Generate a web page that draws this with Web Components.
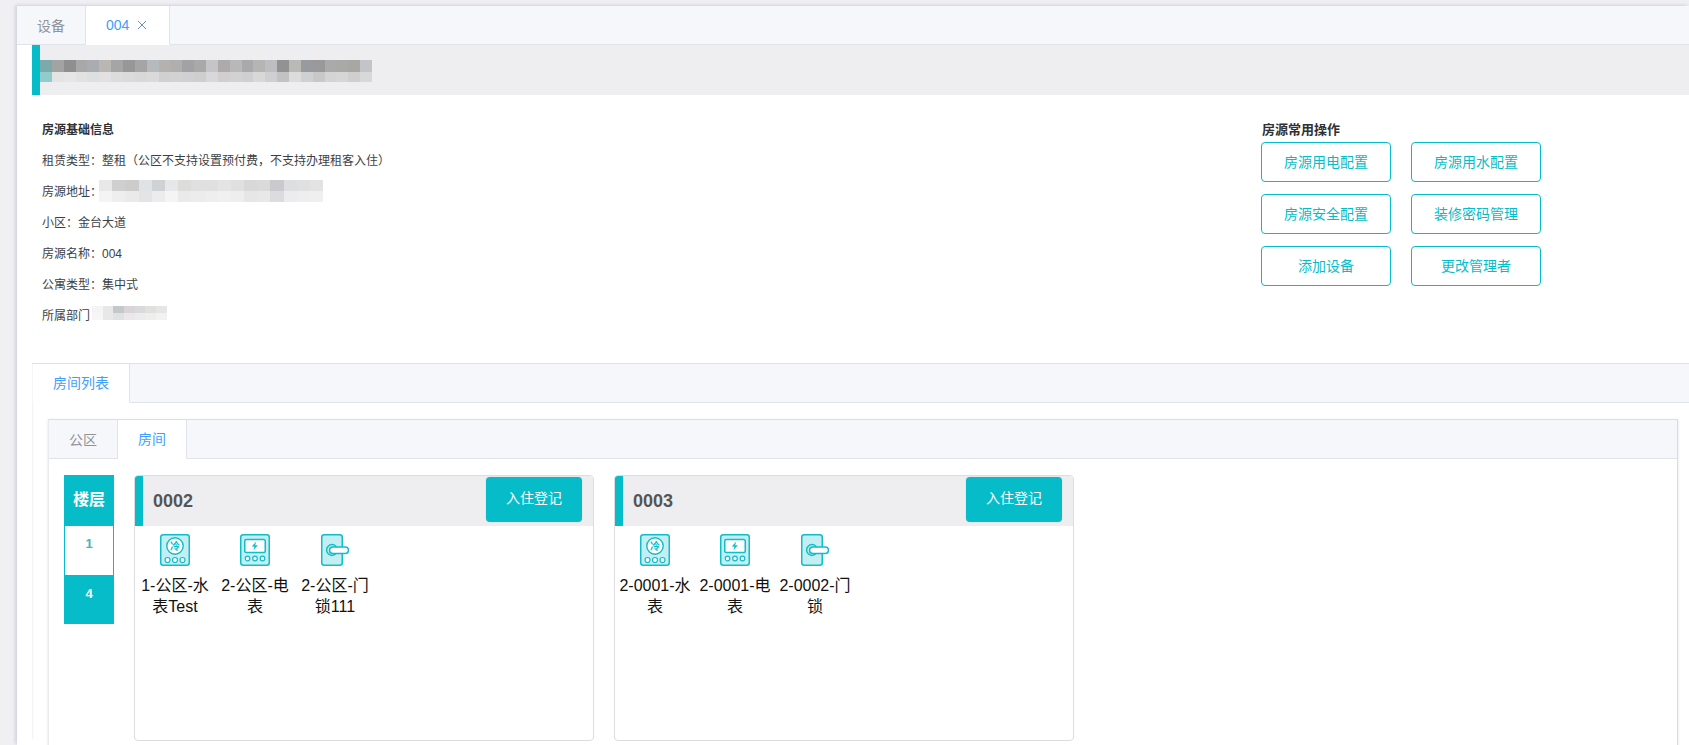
<!DOCTYPE html>
<html lang="zh">
<head>
<meta charset="utf-8">
<title>房源详情</title>
<style>
  html, body { margin: 0; padding: 0; height: 745px; overflow: hidden; }
  body {
    background: #f0f0f3;
    color: #303133;
    font-family: "Liberation Sans", "Noto Sans CJK SC", sans-serif;
  }
</style>
</head>
<body>
<house-page></house-page>

<script>
const FONT = '"Liberation Sans", "Noto Sans CJK SC", sans-serif';
const TEAL = '#06bcc8';

class TabBar extends HTMLElement {
  constructor() {
    super();
    this.attachShadow({mode: 'open'}).innerHTML = `
      <style>
        :host {
          display: flex;
          height: 39px;
          box-sizing: border-box;
          background: #f5f7fa;
          border-bottom: 1px solid #e0e3ec;
        }
      </style>
      <slot></slot>
    `;
  }
}
customElements.define('tab-bar', TabBar);

class TabItem extends HTMLElement {
  constructor() {
    super();
    this.attachShadow({mode: 'open'}).innerHTML = `
      <style>
        :host {
          display: flex;
          align-items: center;
          gap: 6px;
          box-sizing: border-box;
          height: 39px;
          padding: 0 20px 2px;
          font-size: 14px;
          color: #909399;
          border-right: 1px solid #e0e3ec;
        }
        :host([active]) {
          color: #409eff;
          background: #fff;
          border-bottom: 1px solid #fff;
        }
        :host([closable]) { padding-bottom: 0; }
        svg { display: block; }
      </style>
      <slot></slot>
      ${this.hasAttribute('closable') ? `<svg width="14" height="14" viewBox="0 0 14 14"><path d="M3 3l8 8M11 3l-8 8" stroke="#6f90c0" stroke-width="1" fill="none"/></svg>` : ''}
    `;
  }
}
customElements.define('tab-item', TabItem);

// stand-in for the pixelated parts of the screenshot
class MosaicStrip extends HTMLElement {
  constructor() {
    super();
    const top = (this.getAttribute('top') || '').split(' ');
    const bottom = (this.getAttribute('bottom') || '').split(' ');
    const cell = this.getAttribute('cell') || 12;
    const row = (list, h) => `<div class="row" style="height:${h}px">${list.map(c => `<i style="background:#${c};width:${cell}px"></i>`).join('')}</div>`;
    this.attachShadow({mode: 'open'}).innerHTML = `
      <style>
        :host { display: block; flex: none; }
        .row { display: flex; }
        i { display: block; height: 100%; }
      </style>
      ${row(top, this.getAttribute('h1') || 12)}
      ${row(bottom, this.getAttribute('h2') || 10)}
    `;
  }
}
customElements.define('mosaic-strip', MosaicStrip);

class InfoLine extends HTMLElement {
  constructor() {
    super();
    this.attachShadow({mode: 'open'}).innerHTML = `
      <style>
        :host {
          display: flex;
          align-items: center;
          height: 31px;
          font-size: 12px;
          color: #3c3f45;
          white-space: nowrap;
        }
        :host([title-line]) { font-weight: bold; color: #303133; }
      </style>
      <slot></slot>
    `;
  }
}
customElements.define('info-line', InfoLine);

class OutlineBtn extends HTMLElement {
  constructor() {
    super();
    this.attachShadow({mode: 'open'}).innerHTML = `
      <style>
        :host {
          display: flex;
          align-items: center;
          justify-content: center;
          box-sizing: border-box;
          width: 130px;
          height: 40px;
          padding-bottom: 2px;
          font-size: 14px;
          color: ${TEAL};
          background: #fff;
          border: 1px solid ${TEAL};
          border-radius: 4px;
        }
      </style>
      <slot></slot>
    `;
  }
}
customElements.define('outline-btn', OutlineBtn);

class FloorNav extends HTMLElement {
  constructor() {
    super();
    this.attachShadow({mode: 'open'}).innerHTML = `
      <style>
        :host {
          display: block;
          flex: none;
          align-self: flex-start;
          width: 50px;
          background: ${TEAL};
          color: #fff;
          text-align: center;
          font-weight: bold;
        }
        .head { height: 51px; line-height: 50px; font-size: 16px; }
        .item { box-sizing: border-box; height: 49px; line-height: 38px; font-size: 13px; }
        .item.on { background: #fff; color: #3fb6bf; margin: 0 1px; line-height: 36px; }
      </style>
      <div class="head">楼层</div>
      <div class="item on">1</div>
      <div class="item">4</div>
    `;
  }
}
customElements.define('floor-nav', FloorNav);

const ICONS = {
  water: `<svg width="30" height="32" viewBox="0 0 30 32">
      <rect x="0.75" y="0.75" width="28.5" height="30.5" rx="2.5" fill="#c4eff2" stroke="#10bdc9" stroke-width="1.5"/>
      <circle cx="15" cy="12" r="8.2" fill="#fff" stroke="#10bdc9" stroke-width="1.4"/>
      <text x="15" y="15.6" text-anchor="middle" font-size="10" font-weight="bold" fill="#10bdc9" font-family="'Noto Sans CJK SC', sans-serif">冷</text>
      <circle cx="7.5" cy="26" r="2.5" fill="#fff" stroke="#10bdc9" stroke-width="1.2"/>
      <circle cx="15" cy="26" r="2.5" fill="#fff" stroke="#10bdc9" stroke-width="1.2"/>
      <circle cx="22.5" cy="26" r="2.5" fill="#fff" stroke="#10bdc9" stroke-width="1.2"/>
    </svg>`,
  power: `<svg width="30" height="32" viewBox="0 0 30 32">
      <rect x="0.75" y="0.75" width="28.5" height="30.5" rx="2.5" fill="#c4eff2" stroke="#10bdc9" stroke-width="1.5"/>
      <rect x="4.75" y="5.5" width="20.5" height="13" rx="1.5" fill="#fff" stroke="#10bdc9" stroke-width="1.5"/>
      <path d="M16.2 7.6l-4.4 5h2.6l-1 3.6 4.4-5h-2.6z" fill="#10bdc9"/>
      <circle cx="7.5" cy="24.5" r="2.3" fill="#fff" stroke="#10bdc9" stroke-width="1.2"/>
      <circle cx="15" cy="24.5" r="2.3" fill="#fff" stroke="#10bdc9" stroke-width="1.2"/>
      <circle cx="22.5" cy="24.5" r="2.3" fill="#fff" stroke="#10bdc9" stroke-width="1.2"/>
    </svg>`,
  lock: `<svg width="28" height="32" viewBox="0 0 28 32">
      <rect x="0.75" y="0.75" width="20.5" height="30.5" rx="2.5" fill="#c4eff2" stroke="#10bdc9" stroke-width="1.5"/>
      <circle cx="11" cy="16" r="5.4" fill="#c4eff2" stroke="#10bdc9" stroke-width="1.5"/>
      <rect x="8.5" y="13" width="19" height="6.4" rx="3.2" fill="#fff" stroke="#10bdc9" stroke-width="1.5"/>
    </svg>`
};

class DeviceItem extends HTMLElement {
  constructor() {
    super();
    this.attachShadow({mode: 'open'}).innerHTML = `
      <style>
        :host {
          display: block;
          flex: none;
          width: 72px;
          text-align: center;
          font-size: 16px;
          line-height: 21px;
          color: #111;
          word-break: break-all;
        }
        .icon { display: flex; justify-content: center; height: 32px; margin-bottom: 9px; }
      </style>
      <div class="icon">${ICONS[this.getAttribute('kind')]}</div>
      <slot></slot>
    `;
  }
}
customElements.define('device-item', DeviceItem);

class RoomCard extends HTMLElement {
  constructor() {
    super();
    this.attachShadow({mode: 'open'}).innerHTML = `
      <style>
        :host {
          display: block;
          flex: none;
          box-sizing: border-box;
          width: 460px;
          height: 266px;
          background: #fff;
          border: 1px solid #dcdde0;
          border-radius: 4px;
          overflow: hidden;
        }
        .head {
          display: flex;
          align-items: flex-start;
          justify-content: space-between;
          box-sizing: border-box;
          height: 50px;
          padding: 1px 11px 0 10px;
          background: #eeeef0;
          border-left: 8px solid ${TEAL};
        }
        .no { font-size: 18px; font-weight: bold; color: #555; line-height: 48px; }
        .enter {
          width: 96px;
          height: 45px;
          line-height: 42px;
          text-align: center;
          font-size: 14px;
          color: #fff;
          background: ${TEAL};
          border-radius: 4px;
          box-shadow: 0 0 0 0.5px #dcdde0;
        }
        .list { display: flex; gap: 8px; padding: 8px 0 0 4px; }
      </style>
      <div class="head">
        <span class="no">${this.getAttribute('no')}</span>
        <div class="enter">入住登记</div>
      </div>
      <div class="list"><slot></slot></div>
    `;
  }
}
customElements.define('room-card', RoomCard);

class HousePage extends HTMLElement {
  constructor() {
    super();
    this.attachShadow({mode: 'open'}).innerHTML = `
      <style>
        :host {
          display: block;
          box-sizing: border-box;
          height: 745px;
          padding: 6px 0 0 17px;
          font-family: ${FONT};
        }
        * { box-sizing: border-box; }
        .page {
          height: 739px;
          background: #fff;
          box-shadow: -2px -1px 3px rgba(120, 125, 150, 0.25);
          overflow: hidden;
        }
        .content { padding-left: 15px; }
        .banner {
          display: flex;
          height: 50px;
          padding-top: 15px;
          background: #eeeef0;
          border-left: 8px solid ${TEAL};
        }
        .info { display: flex; height: 268px; }
        .basic { flex: 0 0 1229px; padding: 18px 0 0 10px; }
        .ops { padding-top: 27px; }
        .ops h3 {
          margin: 0 0 4px 1px;
          height: 16px;
          line-height: 16px;
          font-size: 13px;
          font-weight: bold;
          color: #303133;
        }
        .ops-grid { display: grid; grid-template-columns: 130px 130px; gap: 12px 20px; }
        .rooms {
          height: 376px;
          padding-left: 1px;
          border-top: 1px solid #dfe2ea;
          box-shadow: inset 2px 0 2px -1px rgba(120, 125, 150, 0.1);
        }
        .rooms-body { padding: 16px 11px 0 15px; }
        .inner {
          height: 330px;
          border-top: 1px solid #dcdfe6;
          border-left: 1px solid #e8eaf0;
          border-right: 1px solid #d9dbe2;
          box-shadow: 0 1px 3px rgba(120, 125, 150, 0.2);
        }
        .inner-body { display: flex; gap: 20px; padding: 16px 0 0 15px; }
        .cards { display: flex; gap: 20px; }
      </style>
      <div class="page">
        <tab-bar>
          <tab-item>设备</tab-item>
          <tab-item active closable>004</tab-item>
        </tab-bar>
        <div class="content">
          <div class="banner">
            <mosaic-strip cell="11.86"
              top="7ca9a9 a3a3a3 8f8f8f a8a8a8 a9adb2 b9b6b3 a5a5a5 979797 a5a5a5 b4babd b5b1ae afafaf a2a2a4 a9a9a9 c5c5c8 aeaaaa b8b8ba a9a9ac b5b5b4 bdbdc2 929292 bbb9b6 979b9f 9a9898 aaaaaa a9a9a7 a9a7a3 c2c4c8"
              bottom="90cccc e4e4e4 e6e6e6 e2e2e2 dedfe0 e2e0e0 dcdcdc dadada d8d8d8 dadada d0d0d0 d2d2d2 d0d0d2 cecece d8d8da cfcfcf d2d2d2 cfcfd1 d8d8d8 cfcfd1 c2c2c2 dcdcdc cfd0d2 c8c8c8 d4d4d4 d6d6d6 cfcfcf d8d8da"></mosaic-strip>
          </div>
          <div class="info">
            <div class="basic">
              <info-line title-line>房源基础信息</info-line>
              <info-line>租赁类型：整租（公区不支持设置预付费，不支持办理租客入住）</info-line>
              <info-line>房源地址：<mosaic-strip style="margin-left:-3px"
                top="e8e8e8 cfcfcf cdccca dfe3e6 d0d1d5 e6e7e8 dcdddb dfe0df e0e0e0 e4e4e4 e0e1df d8d8d8 dadada c9c9ce dddee0 e0e0e0 e3e3e3"
                bottom="f4f4f4 eeeeee eaeaea e4e4e6 ececec f4f4f4 eaeaea ececec eeeeee f0f0f0 eeeeee e6e6e6 e8e8e8 dcdce0 ececee eeeeee efefef"
                cell="13.2" h1="11" h2="11"></mosaic-strip></info-line>
              <info-line>小区：金台大道</info-line>
              <info-line>房源名称：004</info-line>
              <info-line>公寓类型：集中式</info-line>
              <info-line>所属部门<mosaic-strip style="margin:-4px 0 0 2px"
                top="f4f4f4 e8e8e8 c4c8ca d8d4d8 dadada e0e0de e6e6e6"
                bottom="f6f6f6 e8e8e8 e0e2e2 eae8ea ececec eeeeee f2f2f2"
                cell="10.7" h1="7" h2="7"></mosaic-strip></info-line>
            </div>
            <div class="ops">
              <h3>房源常用操作</h3>
              <div class="ops-grid">
                <outline-btn>房源用电配置</outline-btn>
                <outline-btn>房源用水配置</outline-btn>
                <outline-btn>房源安全配置</outline-btn>
                <outline-btn>装修密码管理</outline-btn>
                <outline-btn>添加设备</outline-btn>
                <outline-btn>更改管理者</outline-btn>
              </div>
            </div>
          </div>
          <div class="rooms">
            <tab-bar>
              <tab-item active>房间列表</tab-item>
            </tab-bar>
            <div class="rooms-body">
              <div class="inner">
                <tab-bar>
                  <tab-item>公区</tab-item>
                  <tab-item active>房间</tab-item>
                </tab-bar>
                <div class="inner-body">
                  <floor-nav></floor-nav>
                  <div class="cards">
                    <room-card no="0002">
                      <device-item kind="water">1-公区-水表Test</device-item>
                      <device-item kind="power">2-公区-电表</device-item>
                      <device-item kind="lock">2-公区-门锁111</device-item>
                    </room-card>
                    <room-card no="0003">
                      <device-item kind="water">2-0001-水表</device-item>
                      <device-item kind="power">2-0001-电表</device-item>
                      <device-item kind="lock">2-0002-门锁</device-item>
                    </room-card>
                  </div>
                </div>
              </div>
            </div>
          </div>
        </div>
      </div>
    `;
  }
}
customElements.define('house-page', HousePage);
</script>
</body>
</html>
